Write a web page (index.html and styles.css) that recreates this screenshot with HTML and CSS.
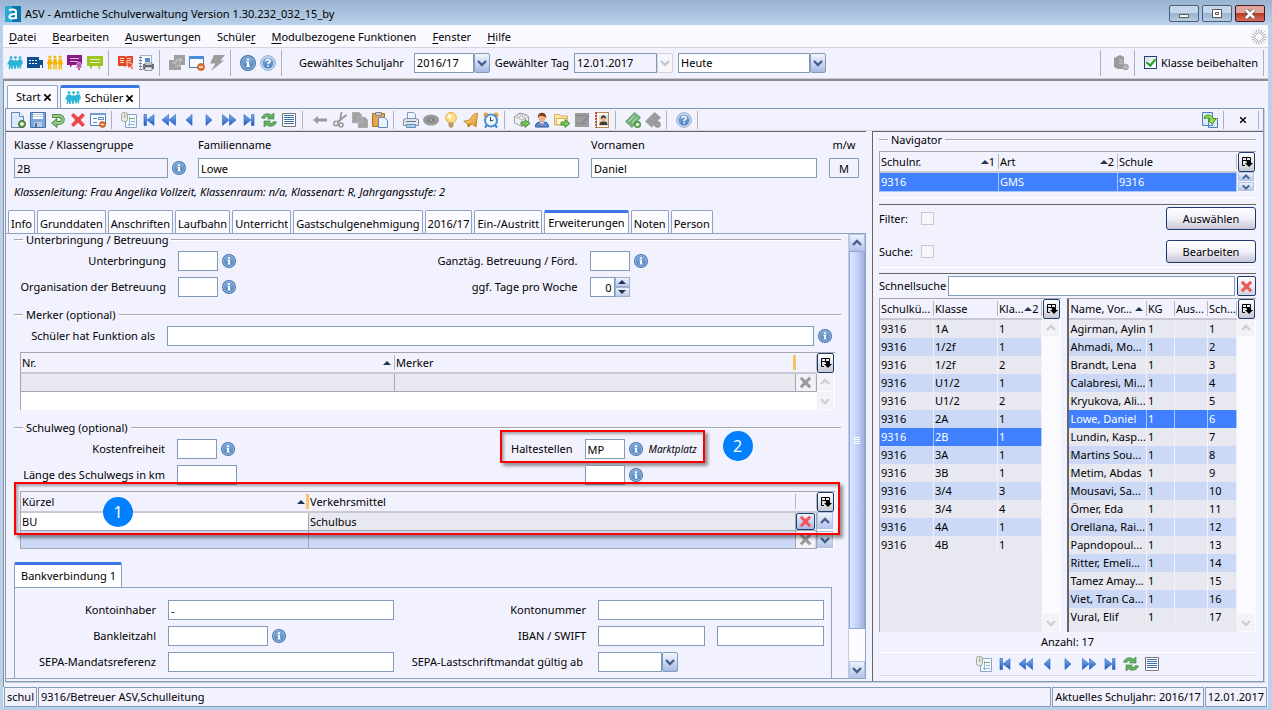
FILE: index.html
```html
<!DOCTYPE html>
<html lang="de">
<head>
<meta charset="utf-8">
<title>ASV - Amtliche Schulverwaltung</title>
<link rel="stylesheet" href="styles.css">
</head>
<body>
<svg class="sprite" aria-hidden="true">
  <defs>
    <linearGradient id="gBlue" x1="0" y1="0" x2="0" y2="1"><stop offset="0" stop-color="#7fb2ee"/><stop offset="1" stop-color="#1c58c0"/></linearGradient>
    <linearGradient id="gInfo" x1="0" y1="0" x2="0" y2="1"><stop offset="0" stop-color="#86afdc"/><stop offset="1" stop-color="#4a80bf"/></linearGradient>
    <linearGradient id="gGold" x1="0" y1="0" x2="1" y2="1"><stop offset="0" stop-color="#ffe9a0"/><stop offset="1" stop-color="#dd8f1a"/></linearGradient>
  </defs>
  <symbol id="i-person3" viewBox="0 0 16 16"><circle cx="4" cy="2.600" r="1.400"/><circle cx="8.500" cy="2.600" r="1.400"/><circle cx="13" cy="2.600" r="1.400"/><path d="M2.500 4.500h3L7 6l1.500-1.500L10 6l1.500-1.500h3.500l1 5-1.300-1-.7 5h-1.200l-.5-3-.7 3h-1.200L9.500 10l-1 4H7.300l-.8-4-1 4H4.200l-.5-3-1 3H1.500l.6-4.500L0 9.500z"/></symbol>
  <symbol id="i-people" viewBox="0 0 16 16"><circle cx="2.800" cy="2" r="1.500"/><circle cx="8" cy="2" r="1.500"/><circle cx="13.200" cy="2" r="1.500"/><path d="M1.500 4h2.800l1.200 5h-.9v5.500H3.200V10h-.7v4.500H1V9H0zM6.600 4h2.800l1.200 5h-.8v5.500H8.400V10h-.8v4.500H6.200V9h-.8zM11.800 4h2.700L16 9h-1v5.500h-1.400V10h-.7v4.500h-1.400V9h-1z"/></symbol>
  <symbol id="i-building" viewBox="0 0 16 16"><path fill="#0b4f94" d="M0 2h12v3h4v8h-1v-3h-2v3H0z"/><path fill="#fff" d="M2 5h2v1H2zM5 5h2v1H5zM8 5h2v1H8zM2 8h2v1H2zM5 8h2v1H5zM8 8h2v1H8z"/></symbol>
  <symbol id="i-board" viewBox="0 0 16 16"><path d="M0 1h16v10h-3v3h-1.500v-3h-6L4 14H3v-3H0z"/><path fill="#fff" opacity=".75" d="M3 4h10v1H3zM3 7h10v1H3z"/></symbol>
  <symbol id="i-boardbell" viewBox="0 0 16 16"><path fill="#8b1a86" d="M0 0h15v10H5l-2 3v-3H0z"/><path fill="#fff" opacity=".7" d="M3 3h9v1H3zM3 6h8v1H3z"/><path fill="#b558ae" stroke="#fff" stroke-width=".6" d="M12 7.500c2 0 2.500 1.500 2.500 3.500l1 2H8.500l1-2c0-2 .5-3.500 2.500-3.500z"/><circle cx="12" cy="14" r="1.200" fill="#b558ae"/></symbol>
  <symbol id="i-book" viewBox="0 0 16 16"><path fill="#e5481f" d="M0 1h7l1 1 1-1h6v10H8l-1 1-1-1H0z"/><path fill="#fff" opacity=".8" d="M2 3h4v1H2zM2 5h4v1H2zM2 7h4v1H2zM9 3h4v1H9zM9 5h4v1H9z"/><path fill="#e5481f" stroke="#fff" stroke-width=".7" d="M8.500 6.500l7 3-2.200 1 2.200 3-1.500 1.200-2.200-3-1.800 1.800z"/></symbol>
  <symbol id="i-report" viewBox="0 0 16 16"><path fill="#f3f6fa" stroke="#a8b3c2" d="M2.500.5h11v14h-11z"/><path stroke="#6f7a88" d="M1 2.500h3M1 5.500h3M1 8.500h3M1 11.500h3M1 14.500h3"/><path fill="#5a8cc9" d="M7 3h5v4H7z"/><path fill="#6b737c" d="M5 9h11v5H5z"/><path fill="#eceff2" stroke="#555" stroke-width=".6" d="M7 8h7v2H7zM7 12h7v3.500H7z"/></symbol>
  <symbol id="i-link" viewBox="0 0 16 16"><path fill="#9f9f9f" d="M5 0h11v10h-4v5H0V5h5z"/><path fill="none" stroke="#cfcfcf" d="M3 8h4V5h5M10 3l3 2-3 2M11 8v3H6"/></symbol>
  <symbol id="i-winminus" viewBox="0 0 16 16"><path fill="#f8fbff" stroke="#4c80bd" d="M.5 1.500h14v11H.5z"/><path fill="#4c8cd8" d="M0 1h15v3H0z"/><circle cx="12" cy="12" r="3.500" fill="#e0712a" stroke="#c04e10" stroke-width=".7"/><path fill="#fff" d="M10 11.300h4v1.400h-4z"/></symbol>
  <symbol id="i-bolt" viewBox="0 0 16 16"><path fill="#9c9c9c" d="M5 0h11l-4.500 5.500H15L2 16l4.500-7.500H1z"/></symbol>
  <symbol id="i-info" viewBox="0 0 16 16"><circle cx="8" cy="8" r="7.400" fill="#a9c6e6" stroke="#4674ad" stroke-width="1.200"/><circle cx="8" cy="8" r="5.700" fill="url(#gInfo)" stroke="#5a8ac4" stroke-width=".6"/><path fill="#fff" d="M6.900 3.800h2.200v1.800H6.900zM6.200 6.500h2.900v4.300h.9v1.200H6.200v-1.200h.8V7.700h-.8z"/></symbol>
  <symbol id="i-help" viewBox="0 0 16 16"><circle cx="8" cy="8" r="7.300" fill="#d3e1f2" stroke="#8aa8cf"/><circle cx="8" cy="8" r="5.600" fill="url(#gInfo)"/><path fill="none" stroke="#fff" stroke-width="1.500" d="M5.900 6.300c.2-2.600 4.200-2.300 4.100 0 0 1.400-2 1.400-2 3"/><path fill="#fff" d="M7.200 10.300h1.600v1.500H7.200z"/></symbol>
  <symbol id="i-server" viewBox="0 0 16 16"><path fill="#9a9a9a" d="M1 3l6-3 4 2v12H5l-4-2z"/><path stroke="#c0c0c0" d="M6 4.500h4M6 6.500h4M6 8.500h4"/><circle cx="12.500" cy="12" r="3.300" fill="#a5a5a5"/><path stroke="#c4c4c4" d="M10.500 12.500h4M12.500 10v4"/></symbol>
  <symbol id="i-new" viewBox="0 0 16 16"><path fill="#dcebfb" stroke="#5b88bd" d="M1.500.5h8l4 4v11h-12z"/><path fill="#fff" stroke="#5b88bd" d="M9.500.5v4h4"/><circle cx="12" cy="12" r="3.500" fill="#6f9f43" stroke="#456f26"/><path fill="#fff" d="M11.300 10h1.400v1.300H14v1.400h-1.300V14h-1.400v-1.300H10v-1.400h1.300z"/></symbol>
  <symbol id="i-save" viewBox="0 0 16 16"><path fill="#7ba6e0" stroke="#4470ae" d="M.5.5h15v15H.5z"/><path fill="#fff" d="M3 1h10v6H3z"/><path fill="#b9cce6" d="M3 2h10v1H3zM3 4h10v1H3zM4 10h8v5H4z"/><path fill="#4b6e9c" d="M5 11h2v4H5z"/></symbol>
  <symbol id="i-undo" viewBox="0 0 16 16"><path fill="none" stroke="#4c8a45" stroke-width="4" d="M2 4h7c5 0 5 7 0 7H6"/><path fill="#8cc47a" stroke="#4c8a45" d="M7 6.500v9L1.500 11z"/><path fill="none" stroke="#9acb86" stroke-width="2" d="M2.500 4H9c5 0 5 7 0 7H6"/></symbol>
  <symbol id="i-x" viewBox="0 0 16 16"><path fill="currentColor" d="M1 3.500L3.500 1 8 5.300 12.500 1 15 3.500 10.700 8l4.300 4.500-2.500 2.500L8 10.700 3.500 15 1 12.500 5.300 8z"/></symbol>
  <symbol id="i-formminus" viewBox="0 0 16 16"><path fill="#f8fbff" stroke="#4c80bd" d="M.5 1.500h15v12H.5z"/><path fill="#6e9fd8" d="M0 1h16v2H0z"/><path stroke="#5f87b8" d="M3 6.500h4M3 10.500h4M8.500 5.500h5v2h-5z" fill="none"/><circle cx="12.500" cy="12.500" r="3" fill="#e0712a" stroke="#c04e10" stroke-width=".7"/><path fill="#fff" d="M10.800 12h3.400v1h-3.400z"/></symbol>
  <symbol id="i-sheet" viewBox="0 0 16 16"><path fill="#f4f9ff" stroke="#8aa5c8" d="M4.500 2.500h11v13h-11z"/><path stroke="#8fb6da" d="M8.500 5v9M10 9.500h4M7 12.500h7"/><path stroke="#7fb65a" d="M8 6.500h6"/><rect x=".5" y=".5" width="6" height="9" rx="2" fill="#e9e9e2" stroke="#a5a5a0"/><path fill="#b0b0aa" d="M3 2h1.500v4H3z"/></symbol>
  <symbol id="i-first" viewBox="0 0 16 16"><path fill="url(#gBlue)" stroke="#2a5fc0" stroke-width=".6" d="M3 2.500h2.500v11H3zM13 2.500v11L6 8z"/></symbol>
  <symbol id="i-rew" viewBox="0 0 16 16"><path fill="url(#gBlue)" stroke="#2a5fc0" stroke-width=".6" d="M7.500 2.500v11L1 8zM14.500 2.500v11L8 8z"/></symbol>
  <symbol id="i-prev" viewBox="0 0 16 16"><path fill="url(#gBlue)" stroke="#2a5fc0" stroke-width=".6" d="M11 2.500v11L5 8z"/></symbol>
  <symbol id="i-next" viewBox="0 0 16 16"><path fill="url(#gBlue)" stroke="#2a5fc0" stroke-width=".6" d="M5 2.500v11L11 8z"/></symbol>
  <symbol id="i-ff" viewBox="0 0 16 16"><path fill="url(#gBlue)" stroke="#2a5fc0" stroke-width=".6" d="M1.500 2.500v11L8 8zM8.500 2.500v11L15 8z"/></symbol>
  <symbol id="i-last" viewBox="0 0 16 16"><path fill="url(#gBlue)" stroke="#2a5fc0" stroke-width=".6" d="M3 2.500v11L10 8zM10.500 2.500H13v11h-2.500z"/></symbol>
  <symbol id="i-refresh" viewBox="0 0 16 16"><path fill="#66b05f" stroke="#35823a" stroke-width=".6" d="M.5 6C2 1.500 7 .5 10.500 3L13 1v6H6.500L8 5.200C6 4.300 4.500 5 3.500 6.500zM15.500 10C14 14.500 9 15.500 5.500 13L3 15V9h6.500L8 10.800c2 .9 3.500.2 4.500-1.300z"/></symbol>
  <symbol id="i-list" viewBox="0 0 16 16"><path fill="#fff" stroke="#777" d="M1.500 1.500h13v13h-13z"/><path fill="#3f6cae" d="M3 3h10v1H3zM3 5h10v1H3zM3 7h10v1H3zM3 9h10v1H3zM3 11h10v1H3z"/></symbol>
  <symbol id="i-back" viewBox="0 0 16 16"><path fill="#9a9a9a" d="M1 8l5-4v2.500h9v3H6V12z"/></symbol>
  <symbol id="i-cut" viewBox="0 0 16 16"><path fill="none" stroke="#999" stroke-width="1.800" d="M9.500 0L8 9M14.500 3L5.500 10"/><circle cx="4" cy="11.500" r="2.200" fill="none" stroke="#999" stroke-width="1.600"/><circle cx="9" cy="13" r="2" fill="none" stroke="#999" stroke-width="1.600"/></symbol>
  <symbol id="i-copy" viewBox="0 0 16 16"><path fill="#a2a2a2" stroke="#c4c4c4" stroke-width=".6" d="M0 0h7l3 3v8H0zM6 5h7l3 3v8H6z"/></symbol>
  <symbol id="i-paste" viewBox="0 0 16 16"><path fill="#e6a44b" stroke="#a86e1c" d="M.5 1.500h12v13H.5z"/><path fill="#ccc" stroke="#888" d="M3.500.5h6v3h-6z"/><path fill="#eaf3fd" stroke="#5b88bd" d="M6.500 5.500h6l3 3v7h-9z"/></symbol>
  <symbol id="i-print" viewBox="0 0 16 16"><path fill="#eef6ff" stroke="#7d98b8" d="M4.500.5h6l2 2v6h-8z"/><path fill="#dfe4ea" stroke="#8390a2" d="M.5 7.500l3-1h9l3 1v6H.5z"/><path fill="#6b7788" d="M3 9h10v1H3z"/><path fill="#9fd0f5" stroke="#6c8fb6" d="M3.500 12.500h9v3h-9z"/></symbol>
  <symbol id="i-eye" viewBox="0 0 16 16"><ellipse cx="8" cy="8" rx="8" ry="5.500" fill="#9a9a9a"/><ellipse cx="8" cy="8" rx="4" ry="2.500" fill="#858585"/><circle cx="8" cy="8" r="1" fill="#bbb"/></symbol>
  <symbol id="i-bulb" viewBox="0 0 16 16"><circle cx="8" cy="5.800" r="5.300" fill="#ffdf82" stroke="#e8a840"/><circle cx="6.500" cy="4.500" r="2.200" fill="#fff6d0"/><path fill="#b59a68" d="M5.500 10.500h5V14L9 15.800H7L5.500 14z"/></symbol>
  <symbol id="i-horn" viewBox="0 0 16 16"><path fill="url(#gGold)" stroke="#b8771a" stroke-width=".8" d="M14.500 1L13 15 9.500 12.500C6 13 3.500 12 .8 9 5 9 7 8 8.500 5 10 2.500 12 1.500 14.500 1z"/><path fill="#b8771a" d="M5 12l3 .8-2.500 2.700L4 13.500z"/></symbol>
  <symbol id="i-clock" viewBox="0 0 16 16"><circle cx="3" cy="3" r="2.500" fill="#e8a23a"/><circle cx="13" cy="3" r="2.500" fill="#e8a23a"/><path stroke="#376eaa" stroke-width="2" d="M4 13l-2 2.500M12 13l2 2.500"/><circle cx="8" cy="8.500" r="6" fill="#eef7ff" stroke="#4f90d2" stroke-width="2"/><path fill="none" stroke="#345" d="M7.500 5v4l3-1"/></symbol>
  <symbol id="i-box" viewBox="0 0 16 16"><path fill="#f0f0f0" stroke="#9a9a9a" d="M.5 4.500L6 1l7 2 1.500 2v6L8 14.500.5 11z"/><path fill="none" stroke="#b5b5b5" d="M.5 4.500L8 8l6.500-3M8 8v6"/><circle cx="5" cy="3.500" r="1.500" fill="#fff" stroke="#aaa"/><circle cx="9.500" cy="3.800" r="1.500" fill="#fff" stroke="#aaa"/><path fill="#7cc45c" stroke="#2f7d28" stroke-width=".8" d="M7 10h4V7.500l5 4-5 4V13H7z"/></symbol>
  <symbol id="i-user" viewBox="0 0 16 16"><path fill="#5a8fd2" stroke="#27508c" d="M1.500 15c0-4 2-5 6.500-5s6.500 1 6.500 5z"/><path fill="#fff" d="M6 10h4l-2 4z"/><circle cx="8" cy="5.500" r="3.800" fill="#f0b283"/><path fill="#7a3b1c" d="M3.800 6C3-1 13-1 12.200 6 11 3.500 7 4.500 6 3.500z"/><path fill="#c42" d="M7.500 10.500h1V14h-1z"/></symbol>
  <symbol id="i-folder" viewBox="0 0 16 16"><path fill="#fbe7a2" stroke="#d9b05a" d="M.5 2.500h5l1 1.500h7v9H.5z"/><path fill="#fff8dc" stroke="#d9b05a" d="M2.500 6.500h11v6h-11z"/><path fill="#7cc45c" stroke="#2f7d28" stroke-width=".8" d="M7 10h4V7.500l5 4-5 4V13H7z"/></symbol>
  <symbol id="i-edit" viewBox="0 0 16 16"><path fill="#9c9c9c" d="M1 1h14v14H1z"/><path fill="#8a8a8a" d="M1 3h12v1H1zM2 11h10v1H2z"/><path stroke="#878787" stroke-width="1.500" d="M15 4l-7 7"/></symbol>
  <symbol id="i-contacts" viewBox="0 0 16 16"><path fill="#fff" stroke="#b98954" d="M2.500.5h12v15h-12z"/><path stroke="#c45a2a" stroke-width="2" stroke-dasharray="2 1" d="M2 0v16"/><path fill="#dcdcdc" d="M5 3h9v11H5z"/><circle cx="9.500" cy="7" r="2.300" fill="#f0b283"/><path fill="#4a3a30" d="M6.800 7c0-5 5.400-5 5.400 0-1.500-2-3-1-5.400 0zM5.500 13c0-3 1-3.500 4-3.500s4 .5 4 3.500z"/></symbol>
  <symbol id="i-tagplus" viewBox="0 0 16 16"><path fill="#74b57c" stroke="#4d8f58" stroke-width=".7" d="M.5 9.500L9.500.5l6 5-8.500 10z"/><path stroke="#cfe8d0" fill="none" d="M3.500 9.500l6-6M7 11l5-5.500"/><circle cx="12.500" cy="12.500" r="3.200" fill="#62a648" stroke="#2f7d28" stroke-width=".7"/><path stroke="#fff" stroke-width="1.300" d="M10.700 12.500h3.600M12.500 10.700v3.600"/></symbol>
  <symbol id="i-tagminus" viewBox="0 0 16 16"><path fill="#9c9c9c" d="M0 9.500L9.500 0l6.500 5.500-9 10z"/><circle cx="12.500" cy="12.500" r="3.200" fill="#929292"/><path stroke="#b0b0b0" stroke-width="1.300" d="M10.700 12.500h3.600"/></symbol>
  <symbol id="i-export" viewBox="0 0 16 16"><path fill="#dcebfb" stroke="#4c80bd" d="M.5.500h10v13H.5zM6.500 6.500h9v9h-9z"/><path fill="#a9e03c" stroke="#2f8a28" d="M2.500 4.500C5 2 10 3 11 6.500h3L10.500 12 6 8.500l2.500-.8C7.500 5.500 5 5.500 2.500 6.500z"/></symbol>
  <symbol id="i-spin" viewBox="0 0 16 16"><path stroke="#b4b4b8" d="M8 0v5M8 11v5M0 8h5M11 8h5M2.300 2.300L6 6M10 10l3.700 3.700M13.700 2.300L10 6M6 10l-3.700 3.700M5 .8l1.500 4.300M9.500 11l1.500 4.200M11 .8L9.500 5M6.500 11L5 15.200M.8 5L5 6.500M11 9.500l4.200 1.500M.8 11L5 9.500M11 6.500L15.200 5"/></symbol>
  <symbol id="i-down" viewBox="0 0 10 10"><path fill="none" stroke="currentColor" stroke-width="2.400" d="M1 3l4 4 4-4"/></symbol>
  <symbol id="i-up" viewBox="0 0 10 10"><path fill="none" stroke="currentColor" stroke-width="2.400" d="M1 7l4-4 4 4"/></symbol>
  <symbol id="i-sort" viewBox="0 0 8 4"><path fill="#1f3550" d="M0 4l4-4 4 4z"/></symbol>
  <symbol id="i-cols" viewBox="0 0 12 12"><path fill="none" stroke="#000" d="M4 9.500H1.500v-8h8v3M1.500 4.500h8M5.500 1.500v4"/><path d="M4 7h2V5h4v2h2l-4 4z"/></symbol>
  <symbol id="i-close" viewBox="0 0 10 10"><path stroke="#000" stroke-width="1.800" d="M1.500 1.500l7 7M8.500 1.500l-7 7"/></symbol>
</svg>

<div class="window">
  <header class="titlebar">
    <svg class="logo" viewBox="0 0 16 16" aria-hidden="true"><path fill="#0877ad" d="M0 0h16v16H0z"/><path fill="#29a9d6" d="M0 0h7v16H0z"/><path fill="none" stroke="#fff" stroke-width="2" d="M4 4.500c2-1.500 7-1.500 7 1.500v7M11 8C3 7.500 3 12.500 6.500 12.500c2.500 0 4.500-1 4.500-2.500"/></svg>
    <h1>ASV - Amtliche Schulverwaltung Version 1.30.232_032_15_by</h1>
    <div class="winbtns">
      <button class="winbtn" aria-label="Minimieren"><svg viewBox="0 0 12 10"><path fill="#fff" stroke="#555" d="M1.500 5.500h9v3h-9z"/></svg></button>
      <button class="winbtn" aria-label="Maximieren"><svg viewBox="0 0 12 10"><path fill="#fff" stroke="#555" d="M1.500.5h9v8h-9zM4.500 3.500h3v2h-3z"/></svg></button>
      <button class="winbtn winbtn-close" aria-label="Schließen"><svg viewBox="0 0 12 10"><path stroke="#555" stroke-width="4.200" d="M2 1l8 8M10 1L2 9"/><path stroke="#fff" stroke-width="2.600" d="M2 1l8 8M10 1L2 9"/></svg></button>
    </div>
  </header>

  <div class="client">
    <nav class="menubar">
      <button><u>D</u>atei</button><button><u>B</u>earbeiten</button><button><u>A</u>uswertungen</button><button>Schüle<u>r</u></button><button><u>M</u>odulbezogene Funktionen</button><button><u>F</u>enster</button><button><u>H</u>ilfe</button>
      <svg class="ico push"><use href="#i-spin"/></svg>
    </nav>

    <div class="toolbar toolbar-main">
      <button class="tb" aria-label="Schüler"><svg class="ico cyan"><use href="#i-person3"/></svg></button>
      <button class="tb" aria-label="Schule"><svg class="ico"><use href="#i-building"/></svg></button>
      <button class="tb" aria-label="Klassen"><svg class="ico yellow"><use href="#i-people"/></svg></button>
      <button class="tb" aria-label="Lehrer"><svg class="ico"><use href="#i-boardbell"/></svg></button>
      <button class="tb" aria-label="Unterricht"><svg class="ico lime"><use href="#i-board"/></svg></button>
      <span class="sep"></span>
      <button class="tb" aria-label="Buch"><svg class="ico"><use href="#i-book"/></svg></button>
      <button class="tb" aria-label="Berichte"><svg class="ico"><use href="#i-report"/></svg></button>
      <span class="sep"></span>
      <button class="tb" aria-label="Verknüpfen"><svg class="ico"><use href="#i-link"/></svg></button>
      <button class="tb" aria-label="Fenster schließen"><svg class="ico"><use href="#i-winminus"/></svg></button>
      <button class="tb" aria-label="Aktion"><svg class="ico"><use href="#i-bolt"/></svg></button>
      <span class="sep"></span>
      <button class="tb" aria-label="Info"><svg class="ico"><use href="#i-info"/></svg></button>
      <button class="tb" aria-label="Hilfe"><svg class="ico"><use href="#i-help"/></svg></button>
      <span class="sep"></span>
      <div class="yearpick">
        <label for="jahr" class="lead">Gewähltes Schuljahr</label>
        <span class="combo combo-year"><select id="jahr"><option>2016/17</option></select><span class="drop"><svg><use href="#i-down"/></svg></span></span>
        <label for="tag">Gewählter Tag</label>
        <span class="combo combo-day disabled"><input id="tag" value="12.01.2017" readonly><span class="drop"><svg><use href="#i-down"/></svg></span></span>
        <span class="combo combo-today"><select aria-label="Tag wählen"><option>Heute</option></select><span class="drop"><svg><use href="#i-down"/></svg></span></span>
      </div>
      <span class="sep push"></span>
      <button class="tb" aria-label="Server"><svg class="ico"><use href="#i-server"/></svg></button>
      <span class="sep"></span>
      <label class="keep"><input type="checkbox" class="check" checked>Klasse beibehalten</label>
      <span class="sep sep-end"></span>
    </div>

    <div class="workspace">
      <div class="doctabs">
        <button class="doctab">Start <svg><use href="#i-close"/></svg></button>
        <button class="doctab active"><svg class="ico cyan"><use href="#i-person3"/></svg>Schüler <svg><use href="#i-close"/></svg></button>
      </div>

      <div class="doc">
        <div class="toolbar toolbar-doc">
          <button class="tb" aria-label="Neu"><svg class="ico"><use href="#i-new"/></svg></button>
          <button class="tb" aria-label="Speichern"><svg class="ico"><use href="#i-save"/></svg></button>
          <button class="tb" aria-label="Rückgängig"><svg class="ico"><use href="#i-undo"/></svg></button>
          <button class="tb" aria-label="Löschen"><svg class="ico red"><use href="#i-x"/></svg></button>
          <button class="tb" aria-label="Formular schließen"><svg class="ico"><use href="#i-formminus"/></svg></button>
          <span class="sep"></span>
          <button class="tb" aria-label="Tabelle"><svg class="ico"><use href="#i-sheet"/></svg></button>
          <button class="tb" aria-label="Erster"><svg class="ico"><use href="#i-first"/></svg></button>
          <button class="tb" aria-label="Zurückspulen"><svg class="ico"><use href="#i-rew"/></svg></button>
          <button class="tb" aria-label="Voriger"><svg class="ico"><use href="#i-prev"/></svg></button>
          <button class="tb" aria-label="Nächster"><svg class="ico"><use href="#i-next"/></svg></button>
          <button class="tb" aria-label="Vorspulen"><svg class="ico"><use href="#i-ff"/></svg></button>
          <button class="tb" aria-label="Letzter"><svg class="ico"><use href="#i-last"/></svg></button>
          <button class="tb" aria-label="Aktualisieren"><svg class="ico"><use href="#i-refresh"/></svg></button>
          <button class="tb" aria-label="Liste"><svg class="ico"><use href="#i-list"/></svg></button>
          <span class="sep"></span>
          <button class="tb" aria-label="Zurück"><svg class="ico"><use href="#i-back"/></svg></button>
          <button class="tb" aria-label="Ausschneiden"><svg class="ico"><use href="#i-cut"/></svg></button>
          <button class="tb" aria-label="Kopieren"><svg class="ico"><use href="#i-copy"/></svg></button>
          <button class="tb" aria-label="Einfügen"><svg class="ico"><use href="#i-paste"/></svg></button>
          <span class="sep"></span>
          <button class="tb" aria-label="Drucken"><svg class="ico"><use href="#i-print"/></svg></button>
          <button class="tb" aria-label="Vorschau"><svg class="ico"><use href="#i-eye"/></svg></button>
          <button class="tb" aria-label="Hinweis"><svg class="ico"><use href="#i-bulb"/></svg></button>
          <button class="tb" aria-label="Meldung"><svg class="ico"><use href="#i-horn"/></svg></button>
          <button class="tb" aria-label="Wiedervorlage"><svg class="ico"><use href="#i-clock"/></svg></button>
          <span class="sep"></span>
          <button class="tb" aria-label="Paket"><svg class="ico"><use href="#i-box"/></svg></button>
          <button class="tb" aria-label="Person"><svg class="ico"><use href="#i-user"/></svg></button>
          <button class="tb" aria-label="Ordner"><svg class="ico"><use href="#i-folder"/></svg></button>
          <button class="tb" aria-label="Bearbeiten"><svg class="ico"><use href="#i-edit"/></svg></button>
          <button class="tb" aria-label="Adressbuch"><svg class="ico"><use href="#i-contacts"/></svg></button>
          <span class="sep"></span>
          <button class="tb" aria-label="Merkmal hinzufügen"><svg class="ico"><use href="#i-tagplus"/></svg></button>
          <button class="tb" aria-label="Merkmal entfernen"><svg class="ico"><use href="#i-tagminus"/></svg></button>
          <span class="sep"></span>
          <button class="tb" aria-label="Hilfe"><svg class="ico"><use href="#i-help"/></svg></button>
          <span class="sep"></span>
          <button class="tb push" aria-label="Exportieren"><svg class="ico"><use href="#i-export"/></svg></button>
          <span class="sep"></span>
          <button class="tb tb-close" aria-label="Schließen"><svg><use href="#i-close"/></svg></button>
          <span class="sep sep-end"></span>
        </div>

        <div class="split">
          <main class="student">
            <div class="idfields">
              <div class="field"><label for="klasse">Klasse / Klassengruppe</label><span class="line"><input id="klasse" class="ro" value="2B" readonly><svg class="info"><use href="#i-info"/></svg></span></div>
              <div class="field"><label for="fam">Familienname</label><input id="fam" value="Lowe"></div>
              <div class="field"><label for="vor">Vornamen</label><input id="vor" value="Daniel"></div>
              <div class="field field-sex"><label for="mw">m/w</label><input id="mw" class="ro" value="M" readonly></div>
            </div>
            <p class="note">Klassenleitung: Frau Angelika Vollzeit, Klassenraum: n/a, Klassenart: R, Jahrgangsstufe: 2</p>

            <div class="tabs">
              <button class="tab">Info</button><button class="tab">Grunddaten</button><button class="tab">Anschriften</button><button class="tab">Laufbahn</button><button class="tab">Unterricht</button><button class="tab">Gastschulgenehmigung</button><button class="tab">2016/17</button><button class="tab">Ein-/Austritt</button><button class="tab active">Erweiterungen</button><button class="tab">Noten</button><button class="tab">Person</button>
            </div>

            <div class="pane">
              <div class="content">
                <section class="group">
                  <h2 class="legend">Unterbringung / Betreuung</h2>
                  <div class="form form-care">
                    <label for="unt">Unterbringung</label>
                    <span class="line"><input id="unt" class="short"><svg class="info"><use href="#i-info"/></svg></span>
                    <label for="ganz">Ganztäg. Betreuung / Förd.</label>
                    <span class="line"><input id="ganz" class="short"><svg class="info"><use href="#i-info"/></svg></span>
                    <label for="org">Organisation der Betreuung</label>
                    <span class="line"><input id="org" class="short"><svg class="info"><use href="#i-info"/></svg></span>
                    <label for="tage">ggf. Tage pro Woche</label>
                    <span class="line spinner"><input id="tage" type="number" value="0"><span class="spin"><button aria-label="Mehr"><svg><use href="#i-sort"/></svg></button><button class="less" aria-label="Weniger"><svg><use href="#i-sort"/></svg></button></span></span>
                  </div>
                </section>

                <section class="group">
                  <h2 class="legend">Merker (optional)</h2>
                  <div class="form form-wide">
                    <label for="funk">Schüler hat Funktion als</label>
                    <span class="line"><input id="funk" class="grow"><svg class="info"><use href="#i-info"/></svg></span>
                  </div>
                  <div class="tablebox">
                    <table class="grid">
                      <colgroup><col class="c-nr"><col><col class="c-del"></colgroup>
                      <thead><tr><th><span class="th">Nr.<svg class="sort"><use href="#i-sort"/></svg></span></th><th class="mark">Merker</th><th></th></tr></thead>
                      <tbody><tr><td></td><td></td><td class="del"><button class="delbtn" disabled aria-label="Löschen"><svg><use href="#i-x"/></svg></button></td></tr></tbody>
                    </table>
                    <div class="vbar disabled"><button class="cols" aria-label="Spalten"><svg><use href="#i-cols"/></svg></button><button class="arrow" aria-label="Nach oben"><svg><use href="#i-up"/></svg></button><button class="arrow end" aria-label="Nach unten"><svg><use href="#i-down"/></svg></button></div>
                  </div>
                </section>

                <section class="group">
                  <h2 class="legend">Schulweg (optional)</h2>
                  <div class="form form-way">
                    <label for="kost">Kostenfreiheit</label>
                    <span class="line"><input id="kost" class="short"><svg class="info"><use href="#i-info"/></svg></span>
                    <label for="halt">Haltestellen</label>
                    <span class="line"><input id="halt" class="short" value="MP"><svg class="info"><use href="#i-info"/></svg><em>Marktplatz</em><span class="callout callout-stop"></span><span class="badge badge-stop">2</span></span>
                    <label for="weg">Länge des Schulwegs in km</label>
                    <span class="line"><input id="weg" class="medium"></span>
                    <span></span>
                    <span class="line"><input class="short" aria-label="Haltestelle 2"><svg class="info"><use href="#i-info"/></svg></span>
                  </div>
                  <div class="tablebox">
                    <table class="grid">
                      <colgroup><col class="c-kz"><col><col class="c-del"></colgroup>
                      <thead><tr><th class="mark"><span class="th">Kürzel<svg class="sort"><use href="#i-sort"/></svg></span></th><th>Verkehrsmittel</th><th></th></tr></thead>
                      <tbody>
                        <tr><td class="editing">BU</td><td>Schulbus</td><td class="del"><button class="delbtn on" aria-label="Löschen"><svg><use href="#i-x"/></svg></button></td></tr>
                        <tr class="alt"><td></td><td></td><td class="del"><button class="delbtn" disabled aria-label="Löschen"><svg><use href="#i-x"/></svg></button></td></tr>
                      </tbody>
                    </table>
                    <div class="vbar"><button class="cols" aria-label="Spalten"><svg><use href="#i-cols"/></svg></button><button class="arrow" aria-label="Nach oben"><svg><use href="#i-up"/></svg></button><button class="arrow end" aria-label="Nach unten"><svg><use href="#i-down"/></svg></button></div>
                    <span class="callout callout-table"></span>
                    <span class="badge badge-table">1</span>
                  </div>
                </section>

                <section class="bank">
                  <button class="banktab">Bankverbindung 1</button>
                  <div class="bankpane">
                    <div class="form form-bank">
                      <label for="inh">Kontoinhaber</label><input id="inh" value="-">
                      <label for="kto">Kontonummer</label><input id="kto">
                      <label for="blz">Bankleitzahl</label><span class="line"><input id="blz" class="blz"><svg class="info"><use href="#i-info"/></svg></span>
                      <label for="iban">IBAN / SWIFT</label><span class="line pair"><input id="iban"><input aria-label="SWIFT"></span>
                      <label for="ref">SEPA-Mandatsreferenz</label><input id="ref">
                      <label for="sepa" class="tight">SEPA-Lastschriftmandat gültig ab</label><span class="combo combo-date"><input id="sepa"><span class="drop"><svg><use href="#i-down"/></svg></span></span>
                    </div>
                  </div>
                </section>
              </div>
              <div class="scroll"><button class="arrow" aria-label="Nach oben"><svg><use href="#i-up"/></svg></button><span class="thumb"></span><span class="track"></span><button class="arrow" aria-label="Nach unten"><svg><use href="#i-down"/></svg></button></div>
            </div>
          </main>

          <aside class="navigator">
            <h2 class="legend">Navigator</h2>
            <div class="tablebox schools">
              <table class="grid">
                <colgroup><col><col><col></colgroup>
                <thead><tr><th><span class="th">Schulnr.<svg class="sort"><use href="#i-sort"/></svg>1</span></th><th><span class="th">Art<svg class="sort"><use href="#i-sort"/></svg>2</span></th><th>Schule</th></tr></thead>
                <tbody><tr class="sel"><td>9316</td><td>GMS</td><td>9316</td></tr></tbody>
              </table>
              <div class="vbar"><button class="cols" aria-label="Spalten"><svg><use href="#i-cols"/></svg></button><button class="arrow" aria-label="Nach oben"><svg><use href="#i-up"/></svg></button><button class="arrow end" aria-label="Nach unten"><svg><use href="#i-down"/></svg></button></div>
            </div>
            <div class="filters">
              <div class="filter"><label for="fil">Filter:</label><input type="checkbox" id="fil" class="check" disabled><button class="btn">Auswählen</button></div>
              <div class="filter"><label for="su">Suche:</label><input type="checkbox" id="su" class="check" disabled><button class="btn">Bearbeiten</button></div>
            </div>
            <div class="quick"><label for="qs">Schnellsuche</label><input id="qs"><button class="clear" aria-label="Suche leeren"><svg><use href="#i-x"/></svg></button></div>

            <div class="lists">
              <div class="tablebox list list-classes">
                <div class="listbody">
                <table class="grid">
                  <colgroup><col class="c-sk"><col class="c-kl"><col></colgroup>
                  <thead><tr><th>Schulkü...</th><th>Klasse</th><th><span class="th">Kla...<svg class="sort"><use href="#i-sort"/></svg>2</span></th></tr></thead>
                  <tbody>
                    <tr><td>9316</td><td>1A</td><td>1</td></tr>
                    <tr><td>9316</td><td>1/2f</td><td>1</td></tr>
                    <tr><td>9316</td><td>1/2f</td><td>2</td></tr>
                    <tr><td>9316</td><td>U1/2</td><td>1</td></tr>
                    <tr><td>9316</td><td>U1/2</td><td>2</td></tr>
                    <tr><td>9316</td><td>2A</td><td>1</td></tr>
                    <tr class="sel"><td>9316</td><td>2B</td><td>1</td></tr>
                    <tr><td>9316</td><td>3A</td><td>1</td></tr>
                    <tr><td>9316</td><td>3B</td><td>1</td></tr>
                    <tr><td>9316</td><td>3/4</td><td>3</td></tr>
                    <tr><td>9316</td><td>3/4</td><td>4</td></tr>
                    <tr><td>9316</td><td>4A</td><td>1</td></tr>
                    <tr><td>9316</td><td>4B</td><td>1</td></tr>
                  </tbody>
                </table>
                </div>
                <div class="vbar disabled"><button class="cols" aria-label="Spalten"><svg><use href="#i-cols"/></svg></button><button class="arrow" aria-label="Nach oben"><svg><use href="#i-up"/></svg></button><button class="arrow end" aria-label="Nach unten"><svg><use href="#i-down"/></svg></button></div>
              </div>
              <div class="tablebox list list-students">
                <div class="listbody">
                <table class="grid">
                  <colgroup><col><col class="c-kg"><col class="c-aus"><col class="c-sch"></colgroup>
                  <thead><tr><th><span class="th">Name, Vor...<svg class="sort"><use href="#i-sort"/></svg></span></th><th>KG</th><th>Aus...</th><th>Sch...</th></tr></thead>
                  <tbody>
                    <tr><td>Agirman, Aylin</td><td>1</td><td></td><td>1</td></tr>
                    <tr><td>Ahmadi, Mo...</td><td>1</td><td></td><td>2</td></tr>
                    <tr><td>Brandt, Lena</td><td>1</td><td></td><td>3</td></tr>
                    <tr><td>Calabresi, Mi...</td><td>1</td><td></td><td>4</td></tr>
                    <tr><td>Kryukova, Ali...</td><td>1</td><td></td><td>5</td></tr>
                    <tr class="sel"><td>Lowe, Daniel</td><td>1</td><td></td><td>6</td></tr>
                    <tr><td>Lundin, Kasp...</td><td>1</td><td></td><td>7</td></tr>
                    <tr><td>Martins Sou...</td><td>1</td><td></td><td>8</td></tr>
                    <tr><td>Metim, Abdas</td><td>1</td><td></td><td>9</td></tr>
                    <tr><td>Mousavi, Sa...</td><td>1</td><td></td><td>10</td></tr>
                    <tr><td>Ömer, Eda</td><td>1</td><td></td><td>11</td></tr>
                    <tr><td>Orellana, Rai...</td><td>1</td><td></td><td>12</td></tr>
                    <tr><td>Papndopoul...</td><td>1</td><td></td><td>13</td></tr>
                    <tr><td>Ritter, Emeli...</td><td>1</td><td></td><td>14</td></tr>
                    <tr><td>Tamez Amay...</td><td>1</td><td></td><td>15</td></tr>
                    <tr><td>Viet, Tran Ca...</td><td>1</td><td></td><td>16</td></tr>
                    <tr><td>Vural, Elif</td><td>1</td><td></td><td>17</td></tr>
                  </tbody>
                </table>
                </div>
                <div class="vbar disabled"><button class="cols" aria-label="Spalten"><svg><use href="#i-cols"/></svg></button><button class="arrow" aria-label="Nach oben"><svg><use href="#i-up"/></svg></button><button class="arrow end" aria-label="Nach unten"><svg><use href="#i-down"/></svg></button></div>
              </div>
            </div>
            <p class="count">Anzahl: 17</p>
            <div class="pager">
              <button class="tb" aria-label="Tabelle"><svg class="ico"><use href="#i-sheet"/></svg></button>
              <button class="tb" aria-label="Erster"><svg class="ico"><use href="#i-first"/></svg></button>
              <button class="tb" aria-label="Zurückspulen"><svg class="ico"><use href="#i-rew"/></svg></button>
              <button class="tb" aria-label="Voriger"><svg class="ico"><use href="#i-prev"/></svg></button>
              <button class="tb" aria-label="Nächster"><svg class="ico"><use href="#i-next"/></svg></button>
              <button class="tb" aria-label="Vorspulen"><svg class="ico"><use href="#i-ff"/></svg></button>
              <button class="tb" aria-label="Letzter"><svg class="ico"><use href="#i-last"/></svg></button>
              <button class="tb" aria-label="Aktualisieren"><svg class="ico"><use href="#i-refresh"/></svg></button>
              <button class="tb" aria-label="Liste"><svg class="ico"><use href="#i-list"/></svg></button>
            </div>
          </aside>
        </div>
      </div>
    </div>

    <footer class="status"><span>schul</span><span class="grow">9316/Betreuer ASV,Schulleitung</span><span>Aktuelles Schuljahr: 2016/17</span><span>12.01.2017</span></footer>
  </div>
</div>
</body>
</html>
```

FILE: styles.css
```css
* { box-sizing: border-box; }

body {
  margin: 0;
  font-family: "Noto Sans", "Open Sans", sans-serif;
  font-size: 11px;
  line-height: 14px;
  color: #000;
  background: #b9d1ea;
}

h1, h2, p { margin: 0; font-size: inherit; font-weight: normal; }

button, input, select { font: inherit; color: inherit; margin: 0; padding: 0; border: 0; background: none; border-radius: 0; }
button { white-space: nowrap; }
label { white-space: nowrap; }
svg { display: block; flex: none; }

input, select {
  height: 20px;
  min-width: 0;
  padding: 0 2px;
  border: 1px solid #7f9db9;
  background: #fff;
}

select { appearance: none; }
input.ro { background: #f2f2ff; }

.sprite { position: absolute; width: 0; height: 0; }
.ico { width: 16px; height: 16px; }
.info { width: 14px; height: 14px; }
.cyan { fill: #29b4d8; }
.yellow { fill: #f7b500; }
.lime { fill: #9cc41c; }
.red { color: #ee474b; }
.push { margin-left: auto; }
.grow { flex: 1; }

/* window frame */
.window { display: flex; flex-direction: column; height: 100vh; min-width: 1100px; overflow: hidden; }

.titlebar {
  flex: none;
  display: flex;
  align-items: center;
  gap: 4px;
  height: 25px;
  padding: 2px 7px 0 5px;
  background: linear-gradient(#9ab3d0, #b9d1ea);
}
.logo { width: 16px; height: 16px; }
.winbtns { display: flex; gap: 3px; margin-left: auto; }
.winbtn {
  display: grid;
  place-items: center;
  width: 30px;
  height: 17px;
  border: 1px solid #4d6076;
  border-radius: 2px;
  background: linear-gradient(#c6d7ea 45%, #9bb4d0 50%, #b5cde6);
}
.winbtn svg { width: 12px; height: 10px; }
.winbtn-close { border-color: #4a1420; background: linear-gradient(#e0a49b 45%, #b83b27 50%, #d4705a); }

.client { flex: 1; min-height: 0; display: flex; flex-direction: column; margin: 0 4px 3px 3px; background: #f2f2ff; }

.menubar {
  flex: none;
  display: flex;
  align-items: center;
  gap: 16px;
  height: 23px;
  padding: 1px 1px 0 6px;
  background: #f9f9ff;
  border-bottom: 1px solid #d5d5e2;
}
.menubar u { text-underline-offset: 2px; }

/* toolbars */
.toolbar { flex: none; display: flex; align-items: center; gap: 4px; }
.toolbar-main { height: 33px; padding: 0 4px 2px; border-bottom: 2px solid #8c8c8c; box-shadow: inset 0 -1px #c9c9d6; }
.toolbar-doc { height: 22px; padding: 0 4px; border-bottom: 1px solid #d5d5e2; }
.tb { display: grid; place-items: center; width: 16px; height: 16px; flex: none; }
.tb-close { width: 20px; }
.tb-close svg { width: 8px; height: 8px; }
.sep { width: 1px; height: 26px; margin: 0 5px 0 1px; background: #b0b0bc; }
.toolbar-doc .sep { height: 18px; }
.sep.push { margin-left: auto; margin-right: 8px; }
.sep.sep-end { margin-right: 0; }

.yearpick { display: flex; align-items: center; gap: 5px; margin-left: 8px; }
.lead { margin-right: 5px; }
.combo { display: flex; align-items: stretch; }
.combo select, .combo input { flex: 1; }
.combo-year { width: 76px; }
.combo-day { width: 99px; }
.combo-today { width: 148px; }
.combo-date { width: 80px; }
.drop {
  display: grid;
  place-items: center;
  width: 16px;
  border: 1px solid #7f9db9;
  border-radius: 2px;
  color: #43608c;
  background: linear-gradient(#f4f6ff, #a9b9e2);
}
.drop svg { width: 10px; height: 10px; }
.combo.disabled input { background: #f2f2ff; }
.combo.disabled .drop { color: #c5c5cf; border-color: #d2d2dc; background: #f6f6fb; }

.keep { display: flex; align-items: center; gap: 4px; }
.check {
  appearance: none;
  display: grid;
  place-items: center;
  width: 13px;
  height: 13px;
  padding: 0;
  border: 1px solid #1c4478;
  background: linear-gradient(135deg, #dcdce4, #fff);
}
.check:checked::after { content: ""; width: 4px; height: 7px; margin-bottom: 2px; border: solid #21a121; border-width: 0 2px 2px 0; transform: rotate(40deg); }
.check:disabled { border-color: #c9c9d2; background: #f6f6fa; }

/* document area */
.workspace { flex: 1; min-height: 0; display: flex; flex-direction: column; padding: 4px 4px 5px 1px; border-left: 1px solid #8c8c8c; }
.doctabs { flex: none; display: flex; align-items: flex-end; gap: 2px; padding-left: 2px; }
.doctab {
  display: flex;
  align-items: center;
  gap: 2px;
  height: 23px;
  padding: 0 5px 0 8px;
  border: 1px solid #8ea3c4;
  border-bottom: 0;
  border-radius: 2px 2px 0 0;
  background: #fbfbff;
}
.doctab svg { width: 9px; height: 9px; }
.doctab .ico { width: 16px; height: 16px; margin-right: 2px; }
.doctab.active { padding-left: 4px; border-top: 3px solid #3b77e4; background: #fff; }

.doc { flex: 1; min-height: 0; display: flex; flex-direction: column; border: 1px solid #8196b8; box-shadow: 1px 1px #c8cedd; }

.split { flex: 1; min-height: 0; display: grid; grid-template-columns: minmax(0, 1fr) 391px; gap: 6px; }

.student { display: flex; flex-direction: column; min-height: 0; padding-bottom: 2px; border-top: 1px solid #666; }

.idfields { flex: none; display: grid; grid-template-columns: 172px 1fr 226px 30px; gap: 12px; padding: 6px 7px 0 8px; }
.field { display: flex; flex-direction: column; gap: 6px; min-width: 0; }
.field-sex label, .field-sex input { text-align: center; }
.line { position: relative; display: flex; align-items: center; gap: 4px; }
.field .line input { flex: 1; }
.note { flex: none; padding: 7px 8px 11px; font-style: italic; }

.tabs { flex: none; display: flex; gap: 2px; height: 23px; padding-left: 2px; }
.tab { height: 23px; padding: 3px 2px 0; border: 1px solid #8ea3c4; border-bottom: 0; border-radius: 2px 2px 0 0; background: #fbfbff; }
.tab.active { padding: 0 3px; border-top: 3px solid #3b77e4; background: #fff; }

.pane { flex: 1; min-height: 0; display: flex; gap: 7px; overflow: hidden; border: 1px solid #8ea3c4; border-width: 1px 1px 1px 0; }
.content { flex: 1; min-width: 0; padding-left: 8px; }

.legend { display: flex; align-items: center; gap: 3px; height: 12px; }
.legend::before, .legend::after { content: ""; height: 2px; background: linear-gradient(#a6a6ae 50%, #fff 50%); }
.legend::before { width: 9px; }
.legend::after { flex: 1; }

.group { margin-bottom: 12px; }
.form {
  display: grid;
  column-gap: 12px;
  row-gap: 6px;
  align-items: center;
  margin-top: 5px;
}
.form label { text-align: right; justify-self: end; }
.form-care { grid-template-columns: 152px minmax(0, 1fr) 152px minmax(0, 1fr); padding-right: 16px; }
.form-wide { grid-template-columns: 141px minmax(0, 1fr); padding-right: 9px; }
.form-way { grid-template-columns: 151px minmax(0, 1fr) 151px minmax(0, 1fr); padding-right: 24px; }
.short { width: 40px; }
.medium { width: 60px; }
.blz { width: 100px; }
.line em { margin-left: 2px; font-size: 10px; }

.spinner { gap: 0; }
.spinner input { width: 25px; text-align: right; appearance: textfield; }
.spinner input::-webkit-inner-spin-button { appearance: none; }
.spin { display: grid; height: 20px; }
.spin button { display: grid; place-items: center; width: 15px; height: 10px; border: 1px solid #9fb0cf; background: linear-gradient(#f0f3ff, #bccaea); }
.spin svg { width: 8px; height: 4px; }
.less svg { transform: rotate(180deg); }

/* tables */
.tablebox { position: relative; display: flex; margin: 6px 6px 0; border: solid #a6a6ae; border-width: 1px 0 0 1px; background: #fff; }
.grid { flex: 1; width: 100%; min-width: 0; align-self: flex-start; table-layout: fixed; border-collapse: separate; border-spacing: 0; }
.grid th, .grid td { padding: 0 1px; text-align: left; font-weight: normal; white-space: nowrap; overflow: hidden; }
.grid th { height: 21px; background: linear-gradient(#b8b8c4, #b8b8c4) right 0 center / 1px 15px no-repeat #f2f2ff; border-bottom: 2px solid #c9c9d6; }
.grid td { height: 18px; background: #e8e8f0; border: solid #a6a6ae; border-width: 0 1px 1px 0; }
.grid th.mark { background-image: linear-gradient(#fbc46a, #fbc46a); background-size: 3px 15px; }
.grid .alt td { background: #cbd9f6; }
.grid td.editing { background: #fff; }
.grid td.del { padding: 0; }
.grid .sel td { color: #fff; background: #4080ff; }
.th { display: flex; align-items: center; padding-right: 3px; }
.sort { width: 8px; height: 4px; margin-left: auto; }
.c-nr { width: 47%; }
.c-kz { width: 288px; }
.c-del { width: 21px; }

.delbtn { display: grid; place-items: center; width: 19px; height: 17px; color: #9a9a9a; background: #f2f2f6; }
.delbtn svg { width: 13px; height: 13px; }
.delbtn.on { color: #f0565a; border: 1px solid #1c4478; border-radius: 2px; background: linear-gradient(#eef2ff, #a9b9e2); }

.vbar { flex: none; display: flex; flex-direction: column; width: 18px; padding-bottom: 1px; background: #fbfbff; }
.cols { display: grid; place-items: center; width: 17px; height: 20px; border: 1px solid #1c3c6c; border-radius: 2px; background: linear-gradient(#fff, #c8c8d4); }
.cols svg { width: 12px; height: 12px; }
.arrow { display: grid; place-items: center; width: 16px; height: 17px; color: #43608c; border: 1px solid #b5c3e2; background: linear-gradient(#eef2ff, #b6c5ea); }
.arrow svg { width: 10px; height: 10px; }
.arrow.end { margin-top: auto; }
.disabled .arrow { color: #cdcdd4; border-color: #f0f0f6; background: #f4f4f8; }
.group .tablebox { min-height: 58px; }

/* bank details */
.bank { display: flex; flex-direction: column; align-items: stretch; margin-top: 13px; padding-right: 9px; }
.banktab { align-self: flex-start; height: 25px; padding: 0 5px 0 6px; border: 1px solid #8ea3c4; border-top: 3px solid #3b77e4; border-bottom: 0; border-radius: 2px 2px 0 0; background: #fff; }
.bankpane { padding: 12px 7px 20px 1px; border: 1px solid #8ea3c4; }
.form-bank { grid-template-columns: 140px minmax(0, 1fr) 180px minmax(0, 1fr); margin-top: 0; }
.form-bank input { width: 100%; }
.form-bank .blz { width: 100px; }
.form-bank .tight { margin-right: 3px; }
.form-bank .pair { gap: 12px; }

.scroll { flex: none; display: flex; flex-direction: column; width: 17px; background: #fcfcff; border-left: 1px solid #c3cde2; }
.scroll .thumb {
  flex: 379;
  border: 1px solid #90a8d8;
  background:
    repeating-linear-gradient(#fff 0 1px, transparent 1px 2px) center / 6px 7px no-repeat,
    linear-gradient(90deg, #dfe7ff, #c3d2fa 50%, #a3b4dd);
}
.scroll .track { flex: 32; }

/* annotations */
.callout { position: absolute; border: 2px solid #f00; box-shadow: 3px 3px 3px #0006, inset 2px 2px 3px #0005; pointer-events: none; }
.callout-stop { left: -85px; top: -9px; width: 205px; height: 33px; }
.callout-table { top: -10px; right: -5px; bottom: 14px; left: -7px; }
.badge { position: absolute; display: grid; place-items: center; width: 30px; height: 30px; border-radius: 50%; font-size: 16px; color: #fff; background: #0080ff; }
.badge-stop { left: 138px; top: -8px; }
.badge-table { left: 82px; top: 5px; }

/* navigator */
.navigator { display: flex; flex-direction: column; min-height: 0; padding: 2px 7px 5px 6px; border: solid #666; border-width: 1px 0 0 1px; }
.navigator .tablebox { margin: 0; }
.navigator .schools { margin-top: 5px; }
.grid .sel td { border-color: #a9c6ff; }
.schools td { height: 19px; }
.navigator .vbar { width: 19px; padding-left: 1px; }
.schools .arrow { height: 9px; }
.schools .arrow svg { height: 8px; }

.filters { display: grid; gap: 10px; margin-top: 5px; padding: 9px 0 4px; border-top: 1px solid #fff; border-bottom: 1px solid #fff; background: linear-gradient(#666, #666) 0 6px / 100% 1px no-repeat; }
.filter { display: flex; align-items: center; }
.filter label { width: 42px; }
.btn { width: 90px; height: 23px; margin-left: auto; border: 1px solid #1c3c6c; border-radius: 3px; background: linear-gradient(#fff, #f0f0f8 50%, #c6c6d6); }
.quick { display: flex; align-items: center; gap: 2px; margin-top: 5px; padding-top: 2px; border-top: 1px solid #666; }
.quick input { flex: 1; }
.clear { display: grid; place-items: center; width: 19px; height: 20px; color: #f0565a; border: 1px solid #1c3c6c; border-radius: 2px; background: linear-gradient(#fff, #d4d4e0); }
.clear svg { width: 13px; height: 13px; }

.lists { flex: 1; min-height: 0; display: grid; grid-template-columns: 182fr 188fr; gap: 6px; margin-top: 2px; }
.list { min-height: 0; overflow: hidden; }
.listbody { flex: 1; min-width: 0; background: #e8e8f0; }
.list td { border-width: 0 1px 0 0; border-color: #f2f2ff; }
.list tbody tr:nth-child(even) td { background: #cbd9f6; }
.list tbody tr.sel td { background: #4080ff; }
.list-students { border-left: 2px solid #666; }
.c-sk { width: 54px; }
.c-kl { width: 64px; }
.c-kg { width: 28px; }
.c-aus { width: 33px; }
.c-sch { width: 29px; }
.count { flex: none; padding: 3px 0; text-align: center; }
.pager { flex: none; display: flex; justify-content: center; align-items: center; gap: 5px; height: 24px; border-top: 1px solid #fff; border-bottom: 1px solid #d5d5e2; }

/* status line */
.status { flex: none; display: flex; gap: 1px; height: 20px; padding: 0 1px; background: #f2f2ff; }
.status span { padding: 2px; border: 1px solid #7f9db9; }
```
